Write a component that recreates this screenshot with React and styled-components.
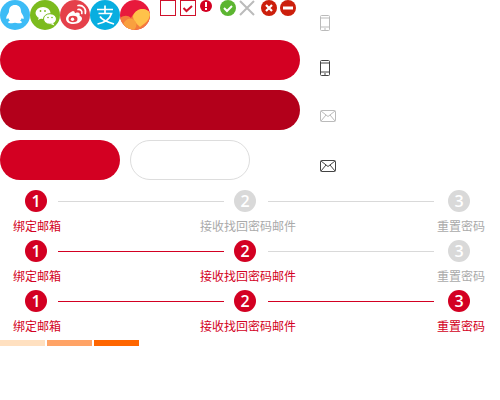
import React from 'react'
import styled, { createGlobalStyle } from 'styled-components'

const Global = createGlobalStyle`
body{
margin:0;
background:#fff;
font-family:"Liberation Sans","Noto Sans CJK SC",sans-serif;
}
`

const Page = styled.div`
width:500px;
height:400px;
overflow:hidden;
`

const Top = styled.div`
display:flex;
height:190px;
`

const LeftCol = styled.div`
width:300px;
display:flex;
flex-direction:column;
`

const IconRow = styled.div`
display:flex;
height:40px;
`

const Social = styled.svg`
width:30px;
height:30px;
display:block;
`

const SmallIcons = styled.div`
display:flex;
align-items:flex-start;
margin-left:10px;
`

const Check = styled.svg`
display:block;
margin-left:${p => p.$left || 0}px;
`

const Pill = styled.div`
width:${p => p.$w || 300}px;
height:40px;
border-radius:20px;
box-sizing:border-box;
background:${p => p.$bg || '#d30022'};
border:${p => p.$line ? '1px solid #ddd' : 'none'};
`

const PillStack = styled.div`
display:flex;
flex-direction:column;
gap:10px;
`

const PillRow = styled.div`
display:flex;
gap:10px;
`

const RightCol = styled.div`
margin-left:20px;
padding-top:15px;
display:flex;
flex-direction:column;
`

const RightIcon = styled.svg`
display:block;
margin-bottom:${p => p.$after}px;
`

const Steps = styled.div`
height:50px;
`

const Track = styled.div`
display:flex;
align-items:center;
height:22px;
padding-left:25px;
`

const Dot = styled.div`
width:22px;
height:22px;
border-radius:50%;
flex:none;
display:flex;
align-items:center;
justify-content:center;
color:#fff;
font:600 16px "Open Sans",sans-serif;
background:${p => p.$on ? '#d30022' : '#d9d9d9'};
`

const Line = styled.div`
width:166px;
height:1px;
flex:none;
margin:0 ${p => p.$r}px 0 ${p => p.$l}px;
background:${p => p.$on ? '#d30022' : '#d9d9d9'};
`

const Labels = styled.div`
display:grid;
grid-template-columns:187px 237px auto;
padding:8px 0 0 13px;
`

const Label = styled.div`
font-size:12px;
line-height:14px;
white-space:nowrap;
color:${p => p.$on ? '#d30022' : '#aaa'};
`

const Bars = styled.div`
display:flex;
gap:2px;
`

const Bar = styled.div`
width:45px;
height:6px;
background:${p => p.$c};
`

const QQ = () => (
  <Social viewBox="0 0 30 30">
    <circle cx="15" cy="15" r="15" fill="#3dbcf6" />
    <path d="M15 5c-3.800 0-6 2.600-6 6 0 1-.2 1.700-.8 2.600-1 1.500-2.200 3.400-1.900 5 .2.800 1 .6 1.900-.6.300 1.100 1 2 1.800 2.700-1.300.4-2 1-1.900 1.600.2.800 2.300 1.200 4 .9.800-.2 1.900-.4 2.900-.4s2.100.2 2.900.4c1.700.3 3.800-.1 4-.9.100-.6-.6-1.200-1.900-1.600.8-.7 1.500-1.600 1.800-2.700.9 1.200 1.700 1.400 1.900.6.300-1.600-.9-3.500-1.900-5-.6-.9-.8-1.600-.8-2.600 0-3.400-2.200-6-6-6z" fill="#fff" />
  </Social>
)

const Wechat = () => (
  <Social viewBox="0 0 30 30">
    <circle cx="15" cy="15" r="15" fill="#7cbb1e" />
    <ellipse cx="13" cy="13" rx="7.500" ry="6" fill="#fff" />
    <path d="M9 17l-1 3 3.500-1.800z" fill="#fff" />
    <ellipse cx="20" cy="19" rx="6.500" ry="5.300" fill="#fff" stroke="#7cbb1e" strokeWidth="1" />
    <path d="M23 23l1.500 2.500-4-1.500z" fill="#fff" />
    <circle cx="10.500" cy="11" r=".9" fill="#7cbb1e" />
    <circle cx="15" cy="11" r=".9" fill="#7cbb1e" />
    <circle cx="18" cy="17.500" r=".8" fill="#7cbb1e" />
    <circle cx="22" cy="17.500" r=".8" fill="#7cbb1e" />
  </Social>
)

const Weibo = () => (
  <Social viewBox="0 0 30 30">
    <circle cx="15" cy="15" r="15" fill="#e5404a" />
    <path d="M13 11c-3 1-7 4.500-7 8 0 3 3.500 5 7.500 5 5 0 8.500-3 8.500-5.500 0-2-2-2.500-2.500-3 .7-1.500.3-3-2-3-1 0-2 .5-2.500.7-.3-.1.300-2-2-2.200z" fill="#fff" />
    <ellipse cx="13" cy="19" rx="4.500" ry="3.300" fill="#e5404a" />
    <circle cx="12.500" cy="19.300" r="1.700" fill="#fff" />
    <path d="M18 9.500c2.500-.5 4.500 1.500 3.800 4M18 5.500c5-.8 8.500 3.500 7.300 8" fill="none" stroke="#fff" strokeWidth="1.600" strokeLinecap="round" />
  </Social>
)

const Alipay = () => (
  <Social viewBox="0 0 30 30">
    <circle cx="15" cy="15" r="15" fill="#08aee0" />
    <path d="M7 9.500h16M15 5.500v8M8.500 13.500h13c-1.500 5-6 9-14 10.500M10 16.500c2 3.500 7 5.500 14 7.500" fill="none" stroke="#fff" strokeWidth="1.700" />
  </Social>
)

const Flower = () => (
  <Social viewBox="0 0 30 30">
    <defs>
      <clipPath id="flowerClip"><circle cx="15" cy="15" r="15" /></clipPath>
    </defs>
    <g clipPath="url(#flowerClip)">
      <rect width="30" height="30" fill="#e8193c" />
      <path d="M0 18c4-3 8-3 11 0 2-4 6-9 11-9 3 0 6 1 8 4v17H0z" fill="#f47c3c" />
      <path d="M13 16c2-5 6-7 9-7 4 0 8 2 8 5 0 6-6 10-10 13-3-3-7-6-7-11z" fill="#ffc24a" />
      <path d="M8 19c3-1 6 0 8 3 1 3 0 6-2 8H4C2 27 3 21 8 19z" fill="#f9a03f" />
    </g>
  </Social>
)

const Box = ({ checked, left }) => (
  <Check $left={left} width="16" height="16" viewBox="0 0 16 16">
    <rect x=".5" y=".5" width="15" height="15" fill="#fff" stroke="#d0112b" />
    {checked && <path d="M3.500 8l3 3 5.500-5" fill="none" stroke="#d0112b" strokeWidth="2" />}
  </Check>
)

const Warn = () => (
  <Check $left={4} width="12" height="12" viewBox="0 0 12 12">
    <circle cx="6" cy="6" r="6" fill="#d30022" />
    <rect x="5" y="2" width="2" height="5" fill="#fff" />
    <rect x="5" y="8" width="2" height="2" fill="#fff" />
  </Check>
)

const OkGreen = () => (
  <Check $left={8} width="16" height="16" viewBox="0 0 16 16">
    <circle cx="8" cy="8" r="8" fill="#5cb531" />
    <path d="M4 8l3 3 5-5" fill="none" stroke="#fff" strokeWidth="2" />
  </Check>
)

const GrayX = () => (
  <Check $left={3} width="16" height="16" viewBox="0 0 16 16">
    <path d="M1 1l14 14M15 1L1 15" stroke="#bbb" strokeWidth="2" />
  </Check>
)

const RedX = () => (
  <Check $left={6} width="16" height="16" viewBox="0 0 16 16">
    <circle cx="8" cy="8" r="8" fill="#cc1f0c" />
    <path d="M5 5l6 6M11 5l-6 6" stroke="#fff" strokeWidth="2.200" />
  </Check>
)

const RedMinus = () => (
  <Check $left={3} width="16" height="16" viewBox="0 0 16 16">
    <circle cx="8" cy="8" r="8" fill="#cc1f0c" />
    <rect x="3" y="6.500" width="10" height="3" fill="#fff" />
  </Check>
)

const Phone = ({ c, after }) => (
  <RightIcon $after={after} width="10" height="16" viewBox="0 0 10 16">
    <rect x=".5" y=".5" width="9" height="15" rx="1" fill="none" stroke={c} />
    <path d="M1 3h8M1 12h8M4 14h2" stroke={c} />
  </RightIcon>
)

const Mail = ({ c, after }) => (
  <RightIcon $after={after} width="16" height="12" viewBox="0 0 16 12">
    <rect x=".5" y=".5" width="15" height="11" rx="1" fill="none" stroke={c} />
    <path d="M1 1l7 5.500L15 1M1 11l5-6M15 11l-5-6" fill="none" stroke={c} />
  </RightIcon>
)

const names = ['绑定邮箱', '接收找回密码邮件', '重置密码']

const StepRow = ({ done }) => (
  <Steps>
    <Track>
      <Dot $on={done >= 1}>1</Dot>
      <Line $l={11} $r={10} $on={done >= 2} />
      <Dot $on={done >= 2}>2</Dot>
      <Line $l={12} $r={14} $on={done >= 3} />
      <Dot $on={done >= 3}>3</Dot>
    </Track>
    <Labels>
      {names.map((name, i) => (
        <Label key={name} $on={done > i}>{name}</Label>
      ))}
    </Labels>
  </Steps>
)

const App = () => (
  <Page>
    <Global />
    <Top>
      <LeftCol>
        <IconRow>
          <QQ />
          <Wechat />
          <Weibo />
          <Alipay />
          <Flower />
          <SmallIcons>
            <Box />
            <Box checked left={4} />
            <Warn />
            <OkGreen />
            <GrayX />
            <RedX />
            <RedMinus />
          </SmallIcons>
        </IconRow>
        <PillStack>
          <Pill />
          <Pill $bg="#b3001b" />
          <PillRow>
            <Pill $w={120} />
            <Pill $w={120} $bg="#fff" $line />
          </PillRow>
        </PillStack>
      </LeftCol>
      <RightCol>
        <Phone c="#bbb" after={29} />
        <Phone c="#444" after={34} />
        <Mail c="#bbb" after={38} />
        <Mail c="#444" after={0} />
      </RightCol>
    </Top>
    <StepRow done={1} />
    <StepRow done={2} />
    <StepRow done={3} />
    <Bars>
      <Bar $c="#ffe0c0" />
      <Bar $c="#ffa366" />
      <Bar $c="#ff6600" />
    </Bars>
  </Page>
)

export default App
